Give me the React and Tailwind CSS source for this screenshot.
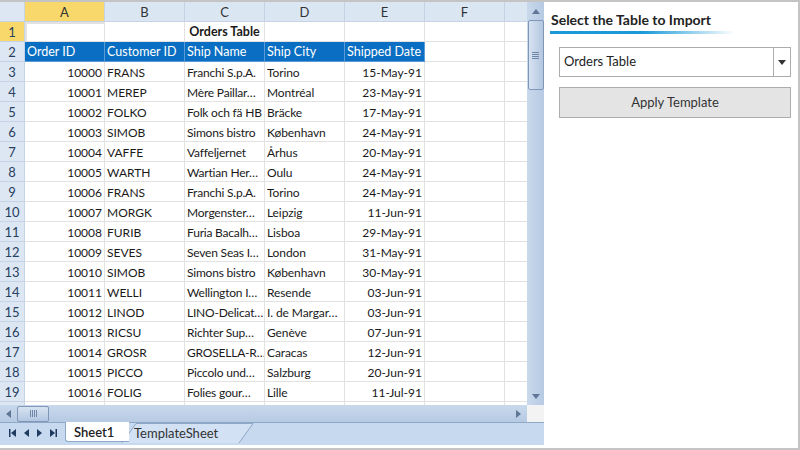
import React from 'react'

const rows = [
  ['10000', 'FRANS', 'Franchi S.p.A.', 'Torino', '15-May-91'],
  ['10001', 'MEREP', 'Mère Paillar…', 'Montréal', '23-May-91'],
  ['10002', 'FOLKO', 'Folk och fä HB', 'Bräcke', '17-May-91'],
  ['10003', 'SIMOB', 'Simons bistro', 'København', '24-May-91'],
  ['10004', 'VAFFE', 'Vaffeljernet', 'Århus', '20-May-91'],
  ['10005', 'WARTH', 'Wartian Her…', 'Oulu', '24-May-91'],
  ['10006', 'FRANS', 'Franchi S.p.A.', 'Torino', '24-May-91'],
  ['10007', 'MORGK', 'Morgenster…', 'Leipzig', '11-Jun-91'],
  ['10008', 'FURIB', 'Furia Bacalh…', 'Lisboa', '29-May-91'],
  ['10009', 'SEVES', 'Seven Seas I…', 'London', '31-May-91'],
  ['10010', 'SIMOB', 'Simons bistro', 'København', '30-May-91'],
  ['10011', 'WELLI', 'Wellington I…', 'Resende', '03-Jun-91'],
  ['10012', 'LINOD', 'LINO-Delicat…', 'I. de Margar…', '03-Jun-91'],
  ['10013', 'RICSU', 'Richter Sup…', 'Genève', '07-Jun-91'],
  ['10014', 'GROSR', 'GROSELLA-R…', 'Caracas', '12-Jun-91'],
  ['10015', 'PICCO', 'Piccolo und…', 'Salzburg', '20-Jun-91'],
  ['10016', 'FOLIG', 'Folies gour…', 'Lille', '11-Jul-91'],
]

const cols = ['A', 'B', 'C', 'D', 'E', 'F']
const heads = ['Order ID', 'Customer ID', 'Ship Name', 'Ship City', 'Shipped Date']

const Cell = ({ children, right, className = '' }) => (
  <div
    className={`w-[80px] h-full shrink-0 border-r border-b border-[#e2e2e2] px-[2px] pt-[2px] flex items-center overflow-hidden whitespace-nowrap ${right ? 'justify-end' : ''} ${className}`}
  >
    {children}
  </div>
)

const RowHead = ({ n, active }) => (
  <div
    className={`w-[25px] h-full shrink-0 border-r border-b border-[#c5d3e4] pt-[2px] flex items-center justify-center text-[13px] text-[#27405f] ${active ? 'bg-[#f8d86a]' : 'bg-[#dde7f3]'}`}
  >
    {n}
  </div>
)

const Tri = ({ dir, className = '' }) => {
  const pts = {
    up: '0,5 4,0 8,5',
    down: '0,0 8,0 4,5',
    left: '5,0 5,8 0,4',
    right: '0,0 0,8 5,4',
  }[dir]
  const vb = dir === 'up' || dir === 'down' ? '0 0 8 5' : '0 0 5 8'
  const w = dir === 'up' || dir === 'down' ? 8 : 5
  const h = dir === 'up' || dir === 'down' ? 5 : 8
  return (
    <svg width={w} height={h} viewBox={vb} className={className}>
      <polygon points={pts} fill="currentColor" />
    </svg>
  )
}

const Sheet = () => (
  <div className="w-[544px] h-full flex flex-col shrink-0">
    <div className="flex h-[403px]">
      <div className="w-[527px] h-full overflow-hidden flex flex-col text-[12px] text-[#1a1a1a]">
        {/* column headers */}
        <div className="flex h-[20px] shrink-0 text-[#333] text-[13px]">
          <div className="w-[25px] h-full shrink-0 bg-[#dde7f3] border-r border-b border-[#c5d3e4]" />
          {cols.map((c, i) => (
            <div
              key={c}
              className={`w-[80px] h-full shrink-0 border-r border-b border-[#c5d3e4] pt-[2px] flex items-center justify-center ${i === 0 ? 'bg-[#f8d86a]' : 'bg-[#dbe6f3]'}`}
            >
              {c}
            </div>
          ))}
          <div className="w-[22px] h-full shrink-0 bg-[#dbe6f3] border-b border-[#c5d3e4]" />
        </div>
        {/* row 1 */}
        <div className="flex h-[20px] shrink-0">
          <RowHead n={1} active />
          <Cell className="border-2 border-[#111]" />
          <Cell />
          <Cell className="justify-center font-bold text-[12.5px]">Orders Table</Cell>
          <Cell />
          <Cell />
          <Cell />
          <div className="flex-1 border-b border-[#e2e2e2]" />
        </div>
        {/* row 2 headers */}
        <div className="flex h-[20px] shrink-0">
          <RowHead n={2} />
          {heads.map((h) => (
            <div
              key={h}
              className="w-[80px] h-full shrink-0 bg-[#0a6fc2] text-white text-[12.5px] border-r border-b border-[#5b9bd5] px-[2px] pt-[2px] flex items-center whitespace-nowrap overflow-hidden"
            >
              {h}
            </div>
          ))}
          <Cell />
          <div className="flex-1 border-b border-[#e2e2e2]" />
        </div>
        {rows.map((r, i) => (
          <div key={i} className="flex h-[20px] shrink-0">
            <RowHead n={i + 3} />
            <Cell right>{r[0]}</Cell>
            <Cell>{r[1]}</Cell>
            <Cell className="tracking-[-0.2px]">{r[2]}</Cell>
            <Cell className="tracking-[-0.1px]">{r[3]}</Cell>
            <Cell right>{r[4]}</Cell>
            <Cell />
            <div className="flex-1 border-b border-[#e2e2e2]" />
          </div>
        ))}
        <div className="flex h-[20px] shrink-0">
          <RowHead n={20} />
          <Cell />
          <Cell />
          <Cell />
          <Cell />
          <Cell />
          <Cell />
        </div>
      </div>
      {/* vertical scrollbar */}
      <div className="w-[17px] h-full bg-gradient-to-r from-[#c9d9ec] to-[#b6cae3] flex flex-col items-center text-[#5f7696]">
        <div className="h-[18px] flex items-center justify-center">
          <Tri dir="up" />
        </div>
        <div className="w-[16px] h-[70px] bg-gradient-to-r from-[#d7e3f1] to-[#b3c7e1] border border-[#7f98b8] rounded-[2px] flex flex-col items-center justify-center gap-[1px]">
          <div className="w-[7px] h-px bg-[#6f86a6]" />
          <div className="w-[7px] h-px bg-[#6f86a6]" />
          <div className="w-[7px] h-px bg-[#6f86a6]" />
          <div className="w-[7px] h-px bg-[#6f86a6]" />
        </div>
        <div className="flex-1" />
        <div className="h-[18px] flex items-center justify-center">
          <Tri dir="down" />
        </div>
      </div>
    </div>
    {/* horizontal scrollbar */}
    <div className="flex h-[17px] shrink-0">
      <div className="w-[527px] h-full bg-gradient-to-b from-[#c9d9ec] to-[#b6cae3] flex items-center text-[#5f7696]">
        <div className="w-[17px] flex justify-center">
          <Tri dir="left" />
        </div>
        <div className="w-[32px] h-[16px] bg-gradient-to-b from-[#d7e3f1] to-[#b3c7e1] border border-[#7f98b8] rounded-[2px] flex items-center justify-center gap-[1px]">
          <div className="w-px h-[7px] bg-[#6f86a6]" />
          <div className="w-px h-[7px] bg-[#6f86a6]" />
          <div className="w-px h-[7px] bg-[#6f86a6]" />
          <div className="w-px h-[7px] bg-[#6f86a6]" />
        </div>
        <div className="flex-1" />
        <div className="w-[17px] flex justify-center">
          <Tri dir="right" />
        </div>
      </div>
      <div className="w-[17px] h-full bg-[#f3f3f3]" />
    </div>
    {/* sheet tabs */}
    <div className="h-[23px] shrink-0 bg-[#c6d9ef] border-t border-[#8ea8c8] flex items-start text-[#1e3a5f] relative">
      <div className="flex items-center gap-[8px] pl-[9px] h-[20px] w-[62px]">
        <svg width="7" height="8" viewBox="0 0 7 8"><rect x="0" y="0" width="1.5" height="8" fill="currentColor" /><polygon points="7,0 7,8 2,4" fill="currentColor" /></svg>
        <Tri dir="left" />
        <Tri dir="right" />
        <svg width="7" height="8" viewBox="0 0 7 8"><polygon points="0,0 0,8 5,4" fill="currentColor" /><rect x="5.5" y="0" width="1.5" height="8" fill="currentColor" /></svg>
      </div>
      <svg className="absolute left-[122px] top-0" width="132" height="21" viewBox="0 0 132 21">
        <polyline points="0,20 14,0.5 131,0.5 117,20" fill="#d2e1f3" stroke="#8ea8c8" strokeWidth="1" />
      </svg>
      <div className="absolute left-[134px] top-[1px] text-[13px] text-[#333]">TemplateSheet</div>
      <div className="relative z-10 ml-[3px] -mt-px h-[20px] w-[64px] bg-white border-l border-b border-[#8ea8c8] rounded-bl-[3px] flex items-center pl-[8px] pt-[2px] text-[13px] font-semibold text-[#222]">
        Sheet1
      </div>
    </div>
    <div className="h-px bg-white" />
  </div>
)

const App = () => {
  return (
    <div
      className="w-[800px] h-[450px] bg-white border-t-2 border-r-2 border-b-2 border-[#c4c4c4] flex overflow-hidden"
      style={{ fontFamily: 'Lato, "Open Sans", sans-serif' }}
    >
      <Sheet />
      <div className="flex-1 flex flex-col">
        <div className="mt-[8px] ml-[7px] text-[14px] font-bold text-[#222] leading-[20px]">Select the Table to Import</div>
        <div className="mt-[1px] ml-[6px] w-[185px] h-[3px] bg-gradient-to-r from-[#1a9ad8] via-[#1a9ad8] to-transparent" />
        <div className="mt-[13px] ml-[15px] w-[232px] h-[30px] border border-[#acacac] flex items-center text-[13px] text-[#222]">
          <div className="flex-1 pl-[4px]">Orders Table</div>
          <div className="w-[17px] h-full border-l border-[#acacac] flex items-center justify-center text-[#333]">
            <Tri dir="down" />
          </div>
        </div>
        <div className="mt-[10px] ml-[15px] w-[232px] h-[31px] bg-[#e4e4e4] border border-[#adadad] flex items-center justify-center text-[13px] text-[#333]">
          Apply Template
        </div>
      </div>
    </div>
  )
}

export default App
